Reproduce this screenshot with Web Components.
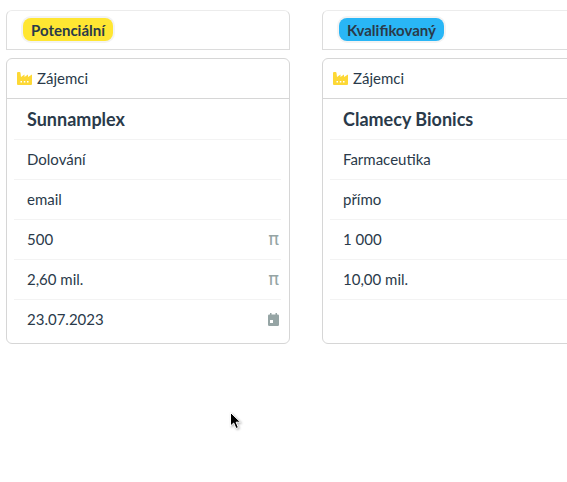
<!DOCTYPE html>
<html lang="cs">
<head>
<meta charset="utf-8">
<title>Pipeline</title>
<style>
  html, body { margin: 0; height: 100%; overflow: hidden; background: #fff; }
  body { font-family: Lato, "Noto Sans", sans-serif; color: #2a3a4a; position: relative; }
</style>
</head>
<body>
<deal-board>
  <deal-column label="Potenciální" color="#ffe632">
    <deal-card name="Sunnamplex">
      <deal-row>Dolování</deal-row>
      <deal-row>email</deal-row>
      <deal-row icon="pi">500</deal-row>
      <deal-row icon="pi">2,60 mil.</deal-row>
      <deal-row icon="calendar">23.07.2023</deal-row>
    </deal-card>
  </deal-column>
  <deal-column label="Kvalifikovaný" color="#29b6f6">
    <deal-card name="Clamecy Bionics">
      <deal-row>Farmaceutika</deal-row>
      <deal-row>přímo</deal-row>
      <deal-row>1 000</deal-row>
      <deal-row>10,00 mil.</deal-row>
      <deal-row></deal-row>
    </deal-card>
  </deal-column>
</deal-board>
<mouse-cursor></mouse-cursor>

<script>
class DealBoard extends HTMLElement {
    constructor() {
        super();
        this.attachShadow({ mode: 'open' });
        this.shadowRoot.innerHTML = `
    <style>
      :host {
        display: flex;
        gap: 32px;
        padding: 10px 0 0 6px;
        width: 561px;
        overflow: hidden;
      }
    </style>
    <slot></slot>
  `;
    }
}

class DealColumn extends HTMLElement {
    constructor() {
        super();
        this.attachShadow({ mode: 'open' });
        this.shadowRoot.innerHTML = `
    <style>
      :host {
        display: flex;
        flex-direction: column;
        gap: 8px;
        width: 284px;
        flex: none;
      }
      .head {
        box-sizing: border-box;
        height: 40px;
        border: 1px solid #dcdcdc;
        border-top-color: #ececec;
        border-radius: 6px 6px 0 0;
        padding: 7px 0 0 16px;
      }
      .tag {
        display: inline-block;
        height: 23px;
        line-height: 24px;
        padding: 0 8px;
        border-radius: 8px;
        font-size: 15px;
        font-weight: 700;
        color: #2a3a4a;
        box-shadow: 0 0 0 2px #f3f3f3;
        vertical-align: top;
      }
    </style>
    <div class="head"><span class="tag"></span></div>
    <slot></slot>
  `;
        const tag = this.shadowRoot.querySelector('.tag');
        tag.textContent = this.getAttribute('label');
        tag.style.background = this.getAttribute('color');
    }
}

class DealCard extends HTMLElement {
    constructor() {
        super();
        this.attachShadow({ mode: 'open' });
        this.shadowRoot.innerHTML = `
    <style>
      :host {
        display: block;
        box-sizing: border-box;
        height: 286px;
        border: 1px solid #d6d6d6;
        border-radius: 6px;
        font-size: 15px;
      }
      .top {
        display: flex;
        align-items: center;
        gap: 5px;
        box-sizing: border-box;
        height: 40px;
        padding-left: 10px;
        border-bottom: 1px solid #d6d6d6;
      }
      .top span { margin-bottom: 2px; }
      svg { width: 15px; height: 13px; display: block; }
      .rows { padding: 0 8px 0 7px; }
      .name {
        height: 41px;
        line-height: 40px;
        padding-left: 13px;
        font-size: 18px;
        font-weight: 700;
        border-bottom: 1px solid #f3f3f3;
        box-sizing: border-box;
      }
    </style>
    <div class="top">
      <svg viewBox="0 0 15 13"><path fill="#fdd835" d="M0 1a1 1 0 0 1 1-1h1.500a1 1 0 0 1 1 .9L4 5l3.500-2.500V5L11 2.500V5l4-2.500V12a1 1 0 0 1-1 1H1a1 1 0 0 1-1-1z"/><path fill="#fff" d="M3.500 9h1.500v1.500H3.500zM6.800 9h1.500v1.500H6.800zM10 9h1.500v1.500H10z"/></svg>
      <span>Zájemci</span>
    </div>
    <div class="rows">
      <div class="name"></div>
      <slot></slot>
    </div>
  `;
        this.shadowRoot.querySelector('.name').textContent = this.getAttribute('name');
    }
}

class DealRow extends HTMLElement {
    constructor() {
        super();
        this.attachShadow({ mode: 'open' });
        const icon = this.getAttribute('icon');
        let mark = '';
        if (icon === 'pi') mark = '<span class="pi">π</span>';
        if (icon === 'calendar') {
            mark = `<svg viewBox="0 0 11 13"><path fill="#96a5a5" d="M2 0h1.500v1.500h4V0H9v1.500h.8A1.200 1.200 0 0 1 11 2.700V11.800A1.200 1.200 0 0 1 9.800 13H1.200A1.200 1.200 0 0 1 0 11.800V2.700A1.200 1.200 0 0 1 1.200 1.500H2z"/><path fill="#fff" d="M2 7h3v3H2z"/></svg>`;
        }
        this.shadowRoot.innerHTML = `
    <style>
      :host {
        display: flex;
        align-items: center;
        justify-content: space-between;
        box-sizing: border-box;
        height: 40px;
        padding: 0 2px 1px 13px;
        border-bottom: 1px solid #f3f3f3;
      }
      :host(:last-child) { border-bottom: none; padding-bottom: 2px; }
      .pi { font-size: 18px; line-height: 18px; color: #96a5a5; font-family: "DejaVu Sans", sans-serif; }
      svg { width: 11px; height: 13px; display: block; }
    </style>
    <span><slot></slot></span>
    ${mark}
  `;
    }
}

class MouseCursor extends HTMLElement {
    constructor() {
        super();
        this.attachShadow({ mode: 'open' });
        this.shadowRoot.innerHTML = `
    <style>
      :host {
        position: absolute;
        left: 230px;
        top: 412px;
        width: 13px;
        height: 19px;
      }
      svg { display: block; overflow: visible; filter: drop-shadow(1px 1px 1px rgba(0,0,0,.3)); }
    </style>
    <svg width="13" height="19" viewBox="0 0 13 19"><path d="M.5.500V14l3.200-3 2.300 5.500 2.400-1-2.300-5.300H10.500z" fill="#000" stroke="#fff" stroke-width="1"/></svg>
  `;
    }
}

customElements.define('deal-board', DealBoard);
customElements.define('deal-column', DealColumn);
customElements.define('deal-card', DealCard);
customElements.define('deal-row', DealRow);
customElements.define('mouse-cursor', MouseCursor);
</script>
</body>
</html>
